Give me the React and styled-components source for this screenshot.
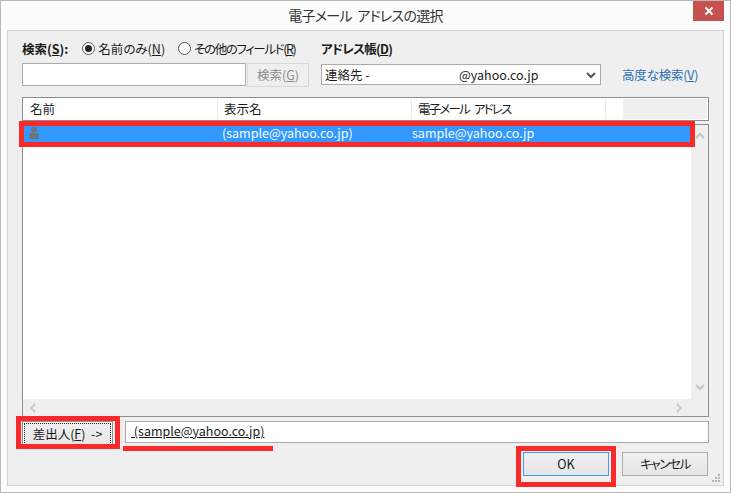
import React from 'react';
import styled, { createGlobalStyle } from 'styled-components';

const GlobalStyle = createGlobalStyle`
  html, body {
    margin: 0;
    padding: 0;
    background: #fff;
  }
  * {
    box-sizing: border-box;
  }
`;

const Window = styled.div`
  position: relative;
  width: 731px;
  height: 493px;
  display: flex;
  flex-direction: column;
  padding: 0 7px 6px 7px;
  background: #fcfcfc;
  border: 1px solid #b9b9b9;
  font-family: "Noto Sans CJK JP", "Open Sans", sans-serif;
  font-feature-settings: "palt";
  font-size: 12.5px;
  line-height: 16px;
  color: #1a1a1a;
  overflow: hidden;
`;

const TitleBar = styled.div`
  position: relative;
  height: 29px;
  flex: none;
  display: flex;
  align-items: center;
  justify-content: center;
  font-size: 14px;
  letter-spacing: -0.7px;
  word-spacing: 3px;
  color: #333;
  padding-bottom: 1px;
`;

const CloseButton = styled.div`
  position: absolute;
  top: 0;
  right: -1px;
  width: 31px;
  height: 20px;
  display: flex;
  align-items: center;
  justify-content: center;
  background: #c75050;
`;

const Panel = styled.div`
  flex: 1;
  position: relative;
  display: flex;
  flex-direction: column;
  margin-left: -1px;
  margin-right: -1px;
  padding: 9px 14px 0 14px;
  background: #efefef;
  border: 1px solid #d2d2d2;
`;

const SearchArea = styled.div`
  display: flex;
  gap: 12px;
  height: 57px;
  flex: none;
`;

const SearchColumn = styled.div`
  width: 287px;
  display: flex;
  flex-direction: column;
`;

const AddressColumn = styled.div`
  flex: 1;
  display: flex;
  flex-direction: column;
`;

const OptionRow = styled.div`
  height: 17px;
  display: flex;
  align-items: center;
  margin-bottom: 6px;
  white-space: nowrap;
`;

const BoldLabel = styled.span`
  font-weight: 700;
  letter-spacing: ${({ $tight }) => $tight || 0}px;
  margin-right: ${({ $gap }) => $gap || 0}px;
`;

const Radio = styled.span`
  width: 13px;
  height: 13px;
  flex: none;
  margin-right: 3px;
  border-radius: 50%;
  border: 1px solid #555;
  background: #fff;
  display: flex;
  align-items: center;
  justify-content: center;

  &::after {
    content: "";
    width: 7px;
    height: 7px;
    border-radius: 50%;
    background: ${({ $checked }) => ($checked ? '#222' : 'transparent')};
  }
`;

const RadioText = styled.span`
  letter-spacing: ${({ $tight }) => $tight || 0}px;
  margin-right: ${({ $gap }) => $gap || 0}px;
`;

const FieldRow = styled.div`
  display: flex;
  align-items: flex-start;
`;

const SearchInput = styled.div`
  width: 224px;
  height: 23px;
  background: #fff;
  border: 1px solid #ababab;
`;

const DisabledButton = styled.div`
  width: 62px;
  height: 24px;
  margin-left: 1px;
  display: flex;
  align-items: center;
  justify-content: center;
  background: #efefef;
  border: 1px solid #d9d9d9;
  color: #8c8c8c;
`;

const AddressRow = styled.div`
  display: flex;
  align-items: center;
`;

const Select = styled.div`
  width: 280px;
  height: 21px;
  margin-top: 1px;
  display: flex;
  align-items: center;
  padding: 0 4px 0 3px;
  background: #fff;
  border: 1px solid #ababab;
`;

const SelectPrefix = styled.span`
  width: 134px;
  flex: none;
`;

const SelectText = styled.span`
  flex: 1;
`;

const AdvancedLink = styled.span`
  margin-left: 21px;
  margin-top: 1px;
  letter-spacing: -0.2px;
  color: #2a6fb5;
`;

const HeaderRow = styled.div`
  height: 24px;
  flex: none;
  display: flex;
  background: #fff;
  border: 1px solid #8e8e8e;
  padding: 1px;
`;

const HeaderCell = styled.div`
  width: ${({ $w }) => $w}px;
  flex: none;
  display: flex;
  align-items: center;
  padding-left: ${({ $pad }) => $pad}px;
  letter-spacing: ${({ $tight }) => $tight || 0}px;
  word-spacing: ${({ $tight }) => ($tight ? 4 : 0)}px;
  border-right: 1px solid #e3ecf5;
`;

const HeaderFill = styled.div`
  margin-left: 17px;
  flex: 1;
  background: #efefef;
`;

const ListBox = styled.div`
  height: 293px;
  margin-top: 3px;
  flex: none;
  display: grid;
  grid-template-columns: 1fr 17px;
  grid-template-rows: 1fr 17px;
  border: 1px solid #8e8e8e;
  background: #fff;
`;

const ListBody = styled.div`
  padding: 1px 0 0 1px;
  background: #fff;
`;

const ContactRow = styled.div`
  height: 17px;
  display: flex;
  align-items: center;
  background: #3399ff;
  color: #f4f9ff;
`;

const ContactCell = styled.div`
  width: ${({ $w }) => $w}px;
  padding-left: ${({ $pad }) => $pad}px;
  flex: none;
  display: flex;
  align-items: center;
  padding-bottom: 3px;
`;

const VScroll = styled.div`
  display: flex;
  flex-direction: column;
  justify-content: space-between;
  align-items: center;
  padding: 7px 0 6px;
  background: #efefef;
`;

const HScroll = styled.div`
  display: flex;
  justify-content: space-between;
  align-items: center;
  padding: 0 6px;
  background: #efefef;
`;

const Corner = styled.div`
  background: #efefef;
`;

const SenderRow = styled.div`
  display: flex;
  margin-top: 4px;
  flex: none;
  height: 26px;
`;

const SenderButton = styled.div`
  width: 91px;
  height: 26px;
  padding: 1px;
  background: linear-gradient(#f0f0f0, #e5e5e5);
  border: 1px solid #8e8e8e;
  box-shadow: inset 0 0 0 1px #fff;
`;

const SenderFocus = styled.div`
  height: 100%;
  display: flex;
  align-items: center;
  justify-content: center;
  border: 1px dotted #222;
  white-space: pre;
`;

const SenderInput = styled.div`
  flex: 1;
  height: 22px;
  margin-left: 12px;
  padding: 0 0 2px 5px;
  display: flex;
  align-items: center;
  background: #fff;
  border: 1px solid #ababab;
`;

const Underlined = styled.span`
  white-space: pre;
  text-decoration: underline;
`;

const Actions = styled.div`
  display: flex;
  justify-content: flex-end;
  gap: 13px;
  margin-top: 5px;
  padding-right: 1px;
`;

const ActionButton = styled.div`
  width: 86px;
  height: 24px;
  display: flex;
  align-items: center;
  justify-content: center;
  letter-spacing: ${({ $tight }) => $tight || 0}px;
  background: linear-gradient(#f0f0f0, #e5e5e5);
  border: 1px solid ${({ $focused }) => ($focused ? '#3c9fe8' : '#ababab')};
`;

const Grip = styled.svg`
  position: absolute;
  right: 2px;
  bottom: 2px;
`;

/* red annotation frames drawn over the dialog */
const Mark = styled.div`
  position: absolute;
  left: ${({ $x }) => $x}px;
  top: ${({ $y }) => $y}px;
  width: ${({ $w }) => $w}px;
  height: ${({ $h }) => $h}px;
  border: 5px solid #fb2a2a;
`;

const MarkLine = styled.div`
  position: absolute;
  left: 122px;
  top: 445px;
  width: 150px;
  height: 5px;
  background: #fb2a2a;
`;

const Key = styled.span`
  text-decoration: underline;
`;

const Chevron = ({ dir }) => {
  const points = {
    up: '1,6 5,2 9,6',
    down: '1,2 5,6 9,2',
    left: '6,1 2,5 6,9',
    right: '2,1 6,5 2,9',
  }[dir];
  return (
    <svg width="10" height="10" viewBox="0 0 10 10" fill="none" style={{ display: 'block' }}>
      <polyline points={points} stroke="#c6c6c6" strokeWidth="2" />
    </svg>
  );
};

const PersonIcon = () => (
  <svg width="12" height="14" viewBox="0 0 12 14" style={{ display: 'block' }}>
    <circle cx="6" cy="3.5" r="3" fill="#6f7478" />
    <path d="M1 13V9.5C1 8 2.2 7 3.5 7h5C9.8 7 11 8 11 9.5V13z" fill="#6f7478" />
  </svg>
);

const App = () => (
  <>
    <GlobalStyle />
    <Window>
      <TitleBar>
        電子メール アドレスの選択
        <CloseButton>
          <svg width="10" height="10" viewBox="0 0 10 10">
            <path d="M1.5 1.5l7 7M8.5 1.5l-7 7" stroke="#fff" strokeWidth="2" />
          </svg>
        </CloseButton>
      </TitleBar>
      <Panel>
        <SearchArea>
          <SearchColumn>
            <OptionRow>
              <BoldLabel $gap={14}>検索(<Key>S</Key>):</BoldLabel>
              <Radio $checked />
              <RadioText $gap={13}>名前のみ(<Key>N</Key>)</RadioText>
              <Radio />
              <RadioText $tight={-1.4}>その他のフィールド(<Key>R</Key>)</RadioText>
            </OptionRow>
            <FieldRow>
              <SearchInput />
              <DisabledButton>検索(<Key>G</Key>)</DisabledButton>
            </FieldRow>
          </SearchColumn>
          <AddressColumn>
            <OptionRow>
              <BoldLabel $tight={-0.7}>アドレス帳(<Key>D</Key>)</BoldLabel>
            </OptionRow>
            <AddressRow>
              <Select>
                <SelectPrefix>連絡先 -</SelectPrefix>
                <SelectText>@yahoo.co.jp</SelectText>
                <svg width="10" height="8" viewBox="0 0 10 8">
                  <polyline points="1,2 5,6 9,2" fill="none" stroke="#555" strokeWidth="2" />
                </svg>
              </Select>
              <AdvancedLink>高度な検索(<Key>V</Key>)</AdvancedLink>
            </AddressRow>
          </AddressColumn>
        </SearchArea>
        <HeaderRow>
          <HeaderCell $w={194} $pad={6}>名前</HeaderCell>
          <HeaderCell $w={194} $pad={6}>表示名</HeaderCell>
          <HeaderCell $w={194} $pad={6} $tight={-1.8}>電子メール アドレス</HeaderCell>
          <HeaderFill />
        </HeaderRow>
        <ListBox>
          <ListBody>
            <ContactRow>
              <ContactCell $w={198} $pad={4}><PersonIcon /></ContactCell>
              <ContactCell $w={190} $pad={0}>(sample@yahoo.co.jp)</ContactCell>
              <ContactCell $w={190} $pad={0}>sample@yahoo.co.jp</ContactCell>
            </ContactRow>
          </ListBody>
          <VScroll>
            <Chevron dir="up" />
            <Chevron dir="down" />
          </VScroll>
          <HScroll>
            <Chevron dir="left" />
            <Chevron dir="right" />
          </HScroll>
          <Corner />
        </ListBox>
        <SenderRow>
          <SenderButton>
            <SenderFocus>差出人(<Key>F</Key>)  -&gt;</SenderFocus>
          </SenderButton>
          <SenderInput>
            <Underlined> (sample@yahoo.co.jp)</Underlined>
          </SenderInput>
        </SenderRow>
        <Actions>
          <ActionButton $focused>OK</ActionButton>
          <ActionButton $tight={-1.4}>キャンセル</ActionButton>
        </Actions>
        <Grip width="10" height="10" viewBox="0 0 10 10" fill="#b4b4b4">
          <rect x="7" y="1" width="2" height="2" />
          <rect x="4" y="4" width="2" height="2" />
          <rect x="7" y="4" width="2" height="2" />
          <rect x="1" y="7" width="2" height="2" />
          <rect x="4" y="7" width="2" height="2" />
          <rect x="7" y="7" width="2" height="2" />
        </Grip>
      </Panel>
      <Mark $x={18} $y={120} $w={676} $h={26} />
      <Mark $x={15} $y={415} $w={104} $h={33} />
      <MarkLine />
      <Mark $x={515} $y={445} $w={100} $h={41} />
    </Window>
  </>
);

export default App;
